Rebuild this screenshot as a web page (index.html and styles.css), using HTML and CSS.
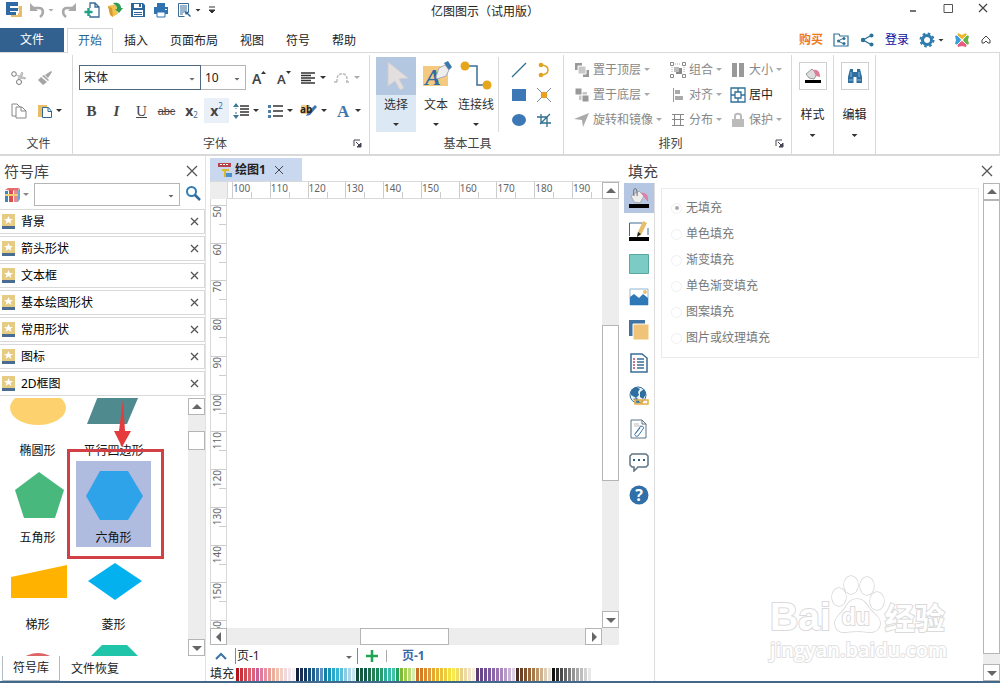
FILE: index.html
```html
<!DOCTYPE html>
<html lang="zh-CN">
<head>
    <meta charset="UTF-8">
    <meta name="viewport" content="width=device-width, initial-scale=1.0">
    <title>亿图图示（试用版）</title>
    <link rel="stylesheet" href="styles.css">
</head>
<body>
    <div class="app">
        <header class="titlebar">
            <div class="quick-access">
                <svg class="icon" viewBox="0 0 16 16"><path d="M0 0h12v4H4v2h8v3H4v1h6v3H0z" fill="#2f6aa5"/><path d="M13 4h3v11H5v-2h7v-2h1V7h-1z" fill="#e9bd68"/></svg>
                <button class="tool" aria-label="撤销"><svg class="icon" viewBox="0 0 16 16"><path d="M4 6h6c5 0 5 6 1 9" fill="none" stroke="#a9a9a9" stroke-width="2.500"/><path d="M1 1v8h8z" fill="#a9a9a9"/></svg><span class="caret pale"></span></button>
                <button class="tool" aria-label="重做"><svg class="icon" viewBox="0 0 16 16"><path d="M12 6H6c-5 0-5 6-1 9" fill="none" stroke="#a9a9a9" stroke-width="2.500"/><path d="M15 1v8H7z" fill="#a9a9a9"/></svg></button>
                <button class="tool" aria-label="新建"><svg class="icon" viewBox="0 0 16 16"><path d="M6 6V1h5l4 4v10H6v-2M11 1v4h4" fill="#fff" stroke="#3b6c96" stroke-width="1.300"/><path d="M4.500 6v8M0.500 10h8" stroke="#1fa287" stroke-width="2.400"/></svg></button>
                <button class="tool" aria-label="打开"><svg class="icon" viewBox="0 0 16 16"><path d="M1 4l8-2 2 10-6 3z" fill="#f1c152"/><path d="M6 1c5-1 8 1 8 5h2l-4 5-4-4h2C10 3 8 3 6 1z" fill="#2c9d54"/><path d="M1 4l4 2 1 9-3-2z" fill="#d99a2c"/></svg></button>
                <button class="tool" aria-label="保存"><svg class="icon" viewBox="0 0 16 16"><path d="M1 1h12l2 2v12H1z" fill="#2d6699"/><path d="M4 2h8v4H4zM3 8h10v6H3z" fill="#fff"/><path d="M9 2h2v3H9zM4 10h8v1H4zM4 12h8v1H4z" fill="#2d6699"/></svg></button>
                <button class="tool" aria-label="打印"><svg class="icon" viewBox="0 0 16 16"><path d="M4 1h8v4H4zM1 5h14v7h-3v-2H4v2H1z" fill="#2f73b0"/><path d="M4 10h8v5H4z" fill="#fff" stroke="#2f73b0"/><path d="M12 7h2v1h-2z" fill="#fff"/></svg></button>
                <button class="tool" aria-label="页面预览"><svg class="icon" viewBox="0 0 16 16"><path d="M2.500 1.500h10v9M2.500 1.500v13h6" fill="none" stroke="#3b6c96"/><path d="M4 4h7M4 6h7M4 8h7M4 10h4M4 12h3" stroke="#3b6c96"/><path d="M8 9l5 1-1 1 3 3-1 1-3-3-1 1z" fill="#2d6699"/></svg><span class="caret"></span></button>
                <button class="tool" aria-label="自定义"><svg class="icon-xs" viewBox="0 0 8 8"><path d="M1 1h6M1 4h6L4 7z" stroke="#333" fill="#333"/></svg></button>
            </div>
            <h1 class="app-title">亿图图示（试用版）</h1>
            <div class="window-controls">
                <button aria-label="最小化"><svg class="icon-s" viewBox="0 0 12 12"><path d="M3 9h6" stroke="#444" stroke-width="1.500"/></svg></button>
                <button aria-label="最大化"><svg class="icon-s" viewBox="0 0 12 12"><path d="M2 2.500h8.500v8H2z" fill="none" stroke="#555"/></svg></button>
                <button aria-label="关闭"><svg class="icon-s" viewBox="0 0 12 12"><path d="M2 2l8 8M10 2l-8 8" stroke="#444" stroke-width="1.200"/></svg></button>
            </div>
        </header>

        <nav class="menu">
            <button class="menu-file">文件</button>
            <button class="menu-tab active">开始</button>
            <button class="menu-tab">插入</button>
            <button class="menu-tab">页面布局</button>
            <button class="menu-tab">视图</button>
            <button class="menu-tab">符号</button>
            <button class="menu-tab">帮助</button>
            <div class="account">
                <a href="#" class="buy">购买</a>
                <button class="tool" aria-label="分享文件夹"><svg class="icon" viewBox="0 0 16 16"><path d="M1 2h5l1 2h8v10H1z" fill="none" stroke="#2f7099" stroke-width="1.200"/><path d="M11 6L5 9l6 3" fill="none" stroke="#2f7099"/><circle cx="11" cy="6.500" r="1.500" fill="#2f7099"/><circle cx="5.500" cy="9" r="1.500" fill="#2f7099"/><circle cx="11" cy="11.500" r="1.500" fill="#2f7099"/></svg></button>
                <button class="tool" aria-label="分享"><svg class="icon" viewBox="0 0 16 16"><path d="M13 3L4 8l9 5" fill="none" stroke="#2f7099" stroke-width="1.400"/><circle cx="12.500" cy="3.500" r="2" fill="#2f7099"/><circle cx="4" cy="8" r="2.200" fill="#2f7099"/><circle cx="12.500" cy="12.500" r="2" fill="#2f7099"/></svg></button>
                <a href="#" class="login">登录</a>
                <button class="tool" aria-label="设置"><svg class="icon" viewBox="0 0 16 16"><circle cx="8" cy="8" r="4.500" fill="none" stroke="#2f7cae" stroke-width="3"/><circle cx="8" cy="8" r="6.500" fill="none" stroke="#2f7cae" stroke-width="2" stroke-dasharray="2.600 2.500"/></svg><span class="caret"></span></button>
                <button class="tool" aria-label="社区"><svg class="icon" viewBox="0 0 16 16"><path d="M8 7L3 4l1-3 4 2 4-2 1 3z" fill="#f0b52b"/><path d="M9 8l3-5 3 1-1 4 1 4-3 1z" fill="#65b548"/><path d="M8 9l5 3-1 3-4-1-4 1-1-3z" fill="#ea5c7d"/><path d="M7 8l-3 5-3-1 1-4-1-4 3-1z" fill="#3a9edb"/><path d="M3 3l10 10M13 3L3 13" stroke="#fff"/></svg></button>
                <button class="tool" aria-label="折叠功能区"><svg class="icon-s" viewBox="0 0 12 12"><path d="M2 6l4-4 4 4v3H8L6 7 4 9H2z" fill="none" stroke="#444"/></svg></button>
            </div>
        </nav>

        <section class="ribbon">
            <div class="group group-file">
                <div class="file-tools">
                    <button class="tool" aria-label="剪切"><svg class="icon" viewBox="0 0 16 16"><circle cx="3" cy="4" r="2.300" fill="none" stroke="#777"/><circle cx="8" cy="12" r="2.500" fill="none" stroke="#777"/><path d="M5 5l10 3-1 1-5-1M7 9l4-7 1 1-2 6" fill="#ccc" stroke="#bbb"/></svg></button>
                    <button class="tool" aria-label="格式刷"><svg class="icon" viewBox="0 0 16 16"><path d="M14 1l1 1-4 6-3-3zM7 5l5 5-1 1-6-5zM4 7l6 5-4 3-5-5z" fill="#a5a5a5"/></svg></button>
                    <button class="tool" aria-label="复制"><svg class="icon" viewBox="0 0 16 16"><path d="M5 13H1V1h5l3 3M5 4h6l4 4v7H5zM10 4v4h5" fill="#fff" stroke="#888"/></svg></button>
                    <button class="tool" aria-label="粘贴"><svg class="icon" viewBox="0 0 16 16"><path d="M1 2h9v3H5v9H1z" fill="#e9bd68"/><path d="M5.500 4.500h6l3 4v6h-9zM11 4.500v4h4" fill="#fff" stroke="#2f6a90"/></svg><span class="caret"></span></button>
                </div>
                <div class="group-label">文件</div>
            </div>

            <div class="group group-font">
                <div class="font-row">
                    <span class="combo combo-font"><select aria-label="字体"><option>宋体</option></select></span>
                    <span class="combo combo-size"><select aria-label="字号"><option>10</option></select></span>
                    <button class="font-btn" aria-label="增大字号"><svg class="icon" viewBox="0 0 16 16"><text x="1" y="14" class="svg-a">A</text><path d="M10 4l2.500-3L15 4z" fill="#333"/></svg></button>
                    <button class="font-btn" aria-label="减小字号"><svg class="icon" viewBox="0 0 16 16"><text x="1" y="14" class="svg-a small">A</text><path d="M10 1h5l-2.500 3z" fill="#333"/></svg></button>
                    <div class="splits">
                        <button class="split" aria-label="对齐方式"><svg class="icon" viewBox="0 0 16 16"><path d="M1 3h14M1 5.500h10M1 8h14M1 10.500h10M1 13h14" stroke="#333" stroke-width="1.300"/></svg><span class="caret"></span></button>
                        <button class="split" aria-label="弧形文字"><svg class="icon" viewBox="0 0 16 16"><path d="M0 12h4M3 12V9c0-7 10-7 10 0v3M12 12h4" fill="none" stroke="#bbb" stroke-width="1.500" stroke-dasharray="3 1"/></svg><span class="caret pale"></span></button>
                    </div>
                </div>
                <div class="font-row">
                    <button class="font-btn serif"><b>B</b></button>
                    <button class="font-btn serif"><b><i>I</i></b></button>
                    <button class="font-btn serif"><u>U</u></button>
                    <button class="font-btn strike"><s>abc</s></button>
                    <button class="font-btn script"><b>x</b><sub>2</sub></button>
                    <button class="font-btn script hover"><b>x</b><sup>2</sup></button>
                    <div class="splits">
                        <button class="split" aria-label="行距"><svg class="icon" viewBox="0 0 16 16"><path d="M7 3h9M7 6h9M7 9h9M7 12h9" stroke="#333" stroke-width="1.500"/><path d="M3 2v4M3 9v5" stroke="#3b6c96" stroke-dasharray="2 1"/><path d="M0 4l3-4 3 4zM0 12l3 4 3-4z" fill="#3f7595"/></svg><span class="caret"></span></button>
                        <button class="split" aria-label="项目符号"><svg class="icon" viewBox="0 0 16 16"><path d="M6 3h10M6 8h10M6 13h10" stroke="#333" stroke-width="1.300"/><path d="M1 2h3v3H1zM1 7h3v3H1zM1 12h3v3H1z" fill="#4f7ea6"/></svg><span class="caret"></span></button>
                        <button class="split" aria-label="突出显示"><svg class="icon" viewBox="0 0 16 16"><path d="M0 2h9v9H0z" fill="#f6cf85"/><path d="M14 2l2 2-7 8-4 1 2-4z" fill="#3e77ad"/><text x="-1" y="10" class="svg-ab">ab</text></svg><span class="caret"></span></button>
                        <button class="split" aria-label="字体颜色"><svg class="icon" viewBox="0 0 16 16"><text x="2" y="14" class="svg-a blue">A</text></svg><span class="caret"></span></button>
                    </div>
                </div>
                <div class="group-label">字体<svg class="launcher" viewBox="0 0 9 9"><path d="M1 7V1h6" fill="none" stroke="#445"/><path d="M3 3l4 4M8 4v4H4z" stroke="#445" fill="#445"/></svg></div>
            </div>

            <div class="group group-tools">
                <div class="tools-body">
                    <button class="big selected">
                        <svg class="icon-big" viewBox="0 0 32 32"><path d="M8 2l20 16-9 1 5 9-4 2-5-9-7 5z" fill="#e3dfdf" stroke="#cfcdd2"/></svg>
                        <span>选择</span><span class="caret"></span>
                    </button>
                    <button class="big">
                        <svg class="icon-big" viewBox="0 0 32 32"><path d="M3 6h25v20H3z" fill="#f3ca80"/><text x="5" y="25" class="svg-a big-a">A</text><path d="M16 17l3-9 6-3 4 5-3 6-9 3z" fill="#eee" stroke="#aab"/><path d="M24 3l4-2 4 6-3 3z" fill="#3d78a8"/></svg>
                        <span>文本</span><span class="caret"></span>
                    </button>
                    <button class="big">
                        <svg class="icon-big" viewBox="0 0 32 32"><path d="M6 6h11v19h10" fill="none" stroke="#3a6f96" stroke-width="1.500"/><circle cx="5" cy="6" r="4.500" fill="#e5a61c"/><circle cx="27" cy="25" r="4.500" fill="#e5a61c"/></svg>
                        <span>连接线</span><span class="caret"></span>
                    </button>
                    <div class="draw-tools">
                        <button class="tool" aria-label="直线"><svg class="icon" viewBox="0 0 16 16"><path d="M1 15L15 1" stroke="#2f6f8f" stroke-width="1.200"/></svg></button>
                        <button class="tool" aria-label="弧线"><svg class="icon" viewBox="0 0 16 16"><path d="M6 3c8 1 8 9 0 10" fill="none" stroke="#e0a222" stroke-width="1.500"/><circle cx="5" cy="3" r="2.300" fill="#e0a222"/><circle cx="5" cy="13" r="2.300" fill="#e0a222"/></svg></button>
                        <button class="tool" aria-label="矩形"><svg class="icon" viewBox="0 0 16 16"><path d="M1 2h14v12H1z" fill="#3b78b5"/></svg></button>
                        <button class="tool" aria-label="连接点"><svg class="icon" viewBox="0 0 16 16"><path d="M1 1l14 14M15 1L1 15" stroke="#78909c"/><circle cx="8" cy="8" r="3.200" fill="#e9a01c"/></svg></button>
                        <button class="tool" aria-label="椭圆"><svg class="icon" viewBox="0 0 16 16"><ellipse cx="8" cy="8" rx="7" ry="6" fill="#3b78b5"/></svg></button>
                        <button class="tool" aria-label="裁剪"><svg class="icon" viewBox="0 0 16 16"><path d="M5 2v9h10M1 5h10v10M4 12L14 2" fill="none" stroke="#2f6f8f" stroke-width="1.300"/></svg></button>
                    </div>
                </div>
                <div class="group-label">基本工具</div>
            </div>

            <div class="group group-arrange">
                <div class="arrange-body">
                    <button class="arrange" disabled><svg class="icon" viewBox="0 0 16 16"><path d="M1 1h7v7H1zM9 8h6v7H9z" fill="#999"/><path d="M4 4h8v8H4z" fill="#c8c8c8" stroke="#fff"/></svg>置于顶层<span class="caret pale"></span></button>
                    <button class="arrange" disabled><svg class="icon" viewBox="0 0 16 16"><path d="M6 6h6v6H6z" fill="#888"/><path d="M.5.500h3v3h-3zM12.500 12.500h3v3h-3z" fill="#fff" stroke="#888"/><path d="M12.500.500h3v3h-3zM.5 12.500h3v3h-3z" fill="#fff" stroke="#888"/><path d="M4 5h5v5H4z" fill="#bbb"/><path d="M5 2h6M2 5v6M14 5v6" stroke="#aaa" stroke-dasharray="1 1"/></svg>组合<span class="caret pale"></span></button>
                    <button class="arrange" disabled><svg class="icon" viewBox="0 0 16 16"><path d="M2 1h5v14H2zM9 1h5v14H9z" fill="#999"/></svg>大小<span class="caret pale"></span></button>
                    <button class="arrange" disabled><svg class="icon" viewBox="0 0 16 16"><path d="M5 5h8v8H5z" fill="#c8c8c8"/><path d="M1 1h7v7H1zM8 8h7v7H8z" fill="#999" stroke="#fff"/></svg>置于底层<span class="caret pale"></span></button>
                    <button class="arrange" disabled><svg class="icon" viewBox="0 0 16 16"><path d="M3.500 1v14" stroke="#999"/><path d="M5 3h5v4H5zM5 9h8v4H5z" fill="#aaa"/></svg>对齐<span class="caret pale"></span></button>
                    <button class="arrange"><svg class="icon" viewBox="0 0 16 16"><path d="M1 1h14v14H1zM5 5h6v6H5zM8 1v4M8 11v4M1 8h4M11 8h4" fill="none" stroke="#2f7099" stroke-width="1.300"/></svg>居中</button>
                    <button class="arrange" disabled><svg class="icon" viewBox="0 0 16 16"><path d="M15 1L9 15 8 8 0 7z" fill="#aaa"/></svg>旋转和镜像<span class="caret pale"></span></button>
                    <button class="arrange" disabled><svg class="icon" viewBox="0 0 16 16"><path d="M2 2.500h12M2 7.500h12M2 13.500h12M4.500 2v12M10.500 2v12" stroke="#888"/></svg>分布<span class="caret pale"></span></button>
                    <button class="arrange" disabled><svg class="icon" viewBox="0 0 16 16"><path d="M2 7h12v8H2z" fill="#bbb"/><path d="M5 7V4c0-3 6-3 6 0v3" fill="none" stroke="#bbb" stroke-width="2"/></svg>保护<span class="caret pale"></span></button>
                </div>
                <div class="group-label">排列<svg class="launcher" viewBox="0 0 9 9"><path d="M1 7V1h6" fill="none" stroke="#445"/><path d="M3 3l4 4M8 4v4H4z" stroke="#445" fill="#445"/></svg></div>
            </div>

            <div class="group group-single">
                <button class="framed">
                    <span class="frame"><svg class="icon" viewBox="0 0 16 16"><path d="M1 6l6-5 5 5-3 5-5-1z" fill="#ddd" stroke="#999"/><path d="M8 2c5-1 7 2 7 7l-4-1z" fill="#dd7f98"/><path d="M0 12h16v3H0z" fill="#000"/></svg></span>
                    <span>样式</span><span class="caret"></span>
                </button>
            </div>
            <div class="group group-single">
                <button class="framed">
                    <span class="frame"><svg class="icon" viewBox="0 0 16 16"><path d="M3 1h3v3h4V1h3l2 8v6H9.500V9h-3v6H1V9z" fill="#2f6f9f"/><path d="M2 12h4M10 12h4M4 4v5M12 4v5" stroke="#8fbbd8"/></svg></span>
                    <span>编辑</span><span class="caret"></span>
                </button>
            </div>
        </section>

        <main class="workspace">
            <aside class="library">
                <div class="panel-head">
                    <h2>符号库</h2>
                    <button class="close" aria-label="关闭符号库"><svg class="icon-s" viewBox="0 0 12 12"><path d="M1 1l10 10M11 1L1 11" stroke="#555" stroke-width="1.300"/></svg></button>
                </div>
                <div class="search-row">
                    <button class="tool" aria-label="选择符号库"><svg class="icon" viewBox="0 0 16 16"><path d="M1 4h3v11H1z" fill="#3b86ba"/><path d="M5 3h4v12H5z" fill="#d94f4f"/><path d="M10 4h4v11h-4z" fill="#e78b93"/><path d="M1 3l3-2h11l-1 3z" fill="#e36d6d"/><path d="M14 4l2-3v11l-2 3z" fill="#6aa8d0"/><path d="M1 8h13" stroke="#f3d06b" stroke-width="2"/></svg><span class="caret"></span></button>
                    <span class="combo combo-search"><input type="text" aria-label="搜索符号"></span>
                    <button class="tool" aria-label="搜索"><svg class="icon" viewBox="0 0 16 16"><circle cx="6.500" cy="6.500" r="4.500" fill="none" stroke="#2f7cb5" stroke-width="2"/><path d="M10 10l5 5" stroke="#2f6a9a" stroke-width="2.500"/></svg></button>
                </div>
                <ul class="lib-list" id="libList"></ul>
                <div class="shapes">
                    <div class="shape-view">
                        <div class="shape-grid">
                            <button class="shape"><svg viewBox="0 0 60 60"><ellipse cx="30" cy="27" rx="28" ry="17" fill="#fdd26e"/></svg>椭圆形</button>
                            <button class="shape"><svg viewBox="0 0 60 60"><path d="M16 10h41L43 43H3z" fill="#4f8a8f"/></svg>平行四边形</button>
                            <button class="shape"><svg viewBox="0 0 60 60"><path d="M31 4l25 18-9 28H16L7 22z" fill="#48b87c"/></svg>五角形</button>
                            <button class="shape chosen"><svg viewBox="0 0 60 60"><path d="M16 3h28l15 25-15 24H16L2 28z" fill="#2ea3ea"/></svg>六角形</button>
                            <button class="shape"><svg viewBox="0 0 60 60"><path d="M3 22L59 10v33H3z" fill="#ffb200"/></svg>梯形</button>
                            <button class="shape"><svg viewBox="0 0 60 60"><path d="M31 8l27 18-27 19L4 26z" fill="#03b1ef"/></svg>菱形</button>
                            <button class="shape" aria-label="圆形"><svg viewBox="0 0 60 60"><circle cx="30" cy="37" r="26" fill="#dd6466"/></svg></button>
                            <button class="shape" aria-label="八角形"><svg viewBox="0 0 60 60"><path d="M18 3h25l14 14v24L43 55H18L4 41V17z" fill="#20c4a8"/></svg></button>
                        </div>
                        <svg class="marker" viewBox="0 0 100 164"><path d="M57 3l2 32h6L56 51 48 35h5z" fill="#e63b3d"/><path d="M2.500 54.500h94v107h-94z" fill="none" stroke="#d04045" stroke-width="3"/></svg>
                    </div>
                    <div class="scroll scroll-v">
                        <button aria-label="向上"><svg viewBox="0 0 10 10"><path d="M0 7l5-5 5 5z"/></svg></button>
                        <span class="thumb thumb-lib"></span>
                        <button aria-label="向下"><svg viewBox="0 0 10 10"><path d="M0 3l5 5 5-5z"/></svg></button>
                    </div>
                </div>
                <div class="lib-tabs">
                    <button class="lib-tab active">符号库</button>
                    <button class="lib-tab">文件恢复</button>
                </div>
            </aside>

            <section class="editor">
                <div class="doc-tabs">
                    <div class="doc-tab">
                        <svg class="icon" viewBox="0 0 16 16"><path d="M1 1h13v4H1z" fill="#b8444b"/><path d="M3 2.500h9" stroke="#fff" stroke-dasharray="2 1"/><path d="M5 7h7v2H5zM7 9h2v6H7z" fill="#d9b92f"/><path d="M9 11h6v4H9z" fill="#4a91cc"/></svg>
                        <b>绘图1</b>
                        <button class="close" aria-label="关闭绘图1"><svg class="icon-xs" viewBox="0 0 8 8"><path d="M0 0l8 8M8 0L0 8" stroke="#445"/></svg></button>
                    </div>
                </div>
                <div class="canvas-area">
                    <div class="corner"></div>
                    <div class="ruler-h" id="rulerH"></div>
                    <div class="ruler-v" id="rulerV"></div>
                    <div class="canvas"></div>
                    <div class="scroll scroll-v editor-scroll-v">
                        <button aria-label="向上"><svg viewBox="0 0 10 10"><path d="M0 7l5-5 5 5z"/></svg></button>
                        <span class="thumb thumb-editor-v"></span>
                        <button aria-label="向下"><svg viewBox="0 0 10 10"><path d="M0 3l5 5 5-5z"/></svg></button>
                    </div>
                    <div class="scroll scroll-h editor-scroll-h">
                        <button aria-label="向左"><svg viewBox="0 0 10 10"><path d="M7 0L2 5l5 5z"/></svg></button>
                        <span class="thumb thumb-editor-h"></span>
                        <button aria-label="向右"><svg viewBox="0 0 10 10"><path d="M3 0l5 5-5 5z"/></svg></button>
                    </div>
                </div>
                <div class="pages">
                    <button class="tool" aria-label="页面列表"><svg class="icon-s" viewBox="0 0 12 12"><path d="M1 9l5-5 5 5" fill="none" stroke="#3b73a5" stroke-width="2"/></svg></button>
                    <span class="combo combo-page"><select aria-label="页面"><option>页-1</option></select></span>
                    <button class="tool" aria-label="新建页面"><svg class="icon-s" viewBox="0 0 12 12"><path d="M6 0v12M0 6h12" stroke="#1fa550" stroke-width="2.500"/></svg></button>
                    <button class="page-tab">页-1</button>
                </div>
                <div class="palette"><span>填充</span><div class="swatches" id="swatches"></div></div>
            </section>

            <aside class="fill">
                <div class="panel-head">
                    <h2>填充</h2>
                    <button class="close" aria-label="关闭填充"><svg class="icon-s" viewBox="0 0 12 12"><path d="M1 1l10 10M11 1L1 11" stroke="#555" stroke-width="1.300"/></svg></button>
                </div>
                <div class="fill-body">
                    <div class="side-tools">
                        <button class="on" aria-label="填充"><svg viewBox="0 0 20 20"><path d="M2 8l8-5 5 5-4 7-6-1z" fill="#eee" stroke="#aaa"/><path d="M5 8c-2-10 4-10 3 0" fill="none" stroke="#666"/><path d="M12 5c5-1 8 3 7 9l-4-5z" fill="#df7fa5"/><path d="M0 16h20v4H0z" fill="#000"/></svg></button>
                        <button aria-label="线条"><svg viewBox="0 0 20 20"><path d="M.5 15V2H13M19 7v7" fill="none" stroke="#3b6c96"/><path d="M14 0l4 2-6 12-4 2 1-5z" fill="#e6bd6a"/><path d="M9 11l3 2-4 3z" fill="#222"/><path d="M0 16h20v4H0z" fill="#000"/></svg></button>
                        <button aria-label="阴影"><svg viewBox="0 0 20 20"><path d="M.5.500h19v19H.5z" fill="#7accc4" stroke="#59a9a2"/></svg></button>
                        <button aria-label="图片"><svg viewBox="0 0 20 20"><path d="M1 2h18v16H1z" fill="#fff" stroke="#8fb6d3"/><path d="M1 10l4-3 5 4 4-4 5 4v7H1z" fill="#2f78b7"/><circle cx="16" cy="5" r="2" fill="#e8c274"/></svg></button>
                        <button aria-label="图层"><svg viewBox="0 0 20 20"><path d="M0 0h16v16H0z" fill="#3f74a3"/><path d="M4 4h16v16H4z" fill="#efc478" stroke="#fff"/></svg></button>
                        <button aria-label="属性"><svg viewBox="0 0 20 20"><path d="M2 1h11l5 4v14H2z" fill="#fff" stroke="#3b6c96" stroke-width="1.500"/><path d="M8 6h7M8 9h7M8 12h7M8 15h7" stroke="#3b6c96" stroke-width="1.300"/><path d="M4 6h2M4 9h2M4 12h2M4 15h2" stroke="#b34b66" stroke-width="1.500"/></svg></button>
                        <button aria-label="超链接"><svg viewBox="0 0 20 20"><circle cx="9" cy="9" r="8" fill="#eef5fa" stroke="#2f6f9f"/><path d="M2 4l5-3 4 2-2 3 1 3-3 3-5-3zM11 6l4-3 2 5-3 5-3-2zM4 13l4-1 3 3-2 2z" fill="#2f6f9f"/><path d="M6 14h6v4H6zM13 14h6v4h-6z" fill="none" stroke="#e6ae42" stroke-width="1.500"/></svg></button>
                        <button aria-label="附件"><svg viewBox="0 0 20 20"><path d="M2 1h11l4 4v14H2zM13 1v4h4" fill="#fff" stroke="#5c7485"/><path d="M5 5h5M5 7h7" stroke="#bbb"/><path d="M6 15l5-7c2-2 5 0 3 2l-5 7c-2 1-4-1-3-2l5-6" fill="none" stroke="#3b79ad"/></svg></button>
                        <button aria-label="批注"><svg viewBox="0 0 20 20"><path d="M3 2h14l2 2v9l-2 2H9l-4 4v-4H3l-2-2V4z" fill="#fff" stroke="#5c7485" stroke-width="1.500"/><path d="M4 7h2v2H4zM9 7h2v2H9zM14 7h2v2h-2z" fill="#2f5f86"/></svg></button>
                        <button aria-label="帮助"><svg viewBox="0 0 20 20"><circle cx="10" cy="10" r="9.500" fill="#2f6faa"/><text x="10" y="16" class="svg-help">?</text></svg></button>
                    </div>
                    <div class="fill-main">
                        <fieldset class="fill-options">
                            <label><input type="radio" name="fill" checked>无填充</label>
                            <label><input type="radio" name="fill">单色填充</label>
                            <label><input type="radio" name="fill">渐变填充</label>
                            <label><input type="radio" name="fill">单色渐变填充</label>
                            <label><input type="radio" name="fill">图案填充</label>
                            <label><input type="radio" name="fill">图片或纹理填充</label>
                        </fieldset>
                        <div class="watermark">
                            <div class="wm-brand">
                                <span class="wm-bai">Bai</span>
                                <span class="wm-paw"><svg viewBox="0 0 54 60"><g fill="#fff" stroke="#d6d6d6" stroke-width="1.500"><ellipse cx="8" cy="23" rx="7" ry="9"/><ellipse cx="20" cy="11" rx="7" ry="9"/><ellipse cx="36" cy="12" rx="7" ry="9"/><ellipse cx="46" cy="27" rx="7" ry="9"/><path d="M26 25c6 0 9 4 12 9 4 6 11 8 11 15s-6 10-12 9-15-1-22 0S4 55 4 49s6-9 10-15c3-5 6-9 12-9z"/></g></svg><span>du</span></span>
                                <span class="wm-cn">经验</span>
                            </div>
                            <div class="wm-url">jingyan.baidu.com</div>
                        </div>
                    </div>
                    <div class="scroll scroll-v">
                        <button aria-label="向上"><svg viewBox="0 0 10 10"><path d="M0 7l5-5 5 5z"/></svg></button>
                        <span class="thumb thumb-fill"></span>
                        <button aria-label="向下"><svg viewBox="0 0 10 10"><path d="M0 3l5 5 5-5z"/></svg></button>
                    </div>
                </div>
            </aside>
        </main>
    </div>
    <script src="script.js"></script>
</body>
</html>
```

FILE: styles.css
```css
* {
    margin: 0;
    padding: 0;
    box-sizing: border-box;
}

body {
    font-family: "Noto Sans", "Noto Sans CJK SC", sans-serif;
    font-size: 12px;
    line-height: 16px;
    color: #222;
    background: #fff;
}

button, input, select {
    font: inherit;
    color: inherit;
    border: none;
    background: none;
}

a {
    text-decoration: none;
}

svg {
    display: block;
    flex: none;
}

.app {
    display: flex;
    flex-direction: column;
    height: 100vh;
    border-bottom: 2px solid #42688a;
    overflow: hidden;
}

.icon {
    width: 16px;
    height: 16px;
    overflow: visible;
}

.icon-s {
    width: 12px;
    height: 12px;
}

.icon-xs {
    width: 8px;
    height: 8px;
}

.caret {
    width: 6px;
    height: 3px;
    background: #333;
    clip-path: polygon(0 0, 100% 0, 50% 100%);
}

.caret.pale {
    background: #aaa;
}

.tool {
    display: flex;
    align-items: center;
    gap: 3px;
}

/* title bar */
.titlebar {
    display: grid;
    grid-template-columns: 1fr auto 1fr;
    align-items: center;
    height: 24px;
    flex: none;
}

.quick-access {
    display: flex;
    align-items: center;
    gap: 7px;
    padding: 0 0 4px 6px;
}

.app-title {
    font-size: 12px;
    font-weight: normal;
    margin-right: 30px;
}

.window-controls {
    display: flex;
    justify-content: flex-end;
    padding-bottom: 8px;
}

.window-controls button {
    display: grid;
    place-items: center;
    width: 35px;
}

/* menu */
.menu {
    display: flex;
    height: 28px;
    padding-top: 4px;
    flex: none;
}

.menu-file {
    width: 64px;
    margin-right: 3px;
    background: #33618f;
    color: #fff;
}

.menu-tab {
    padding: 0 10px;
    border: 1px solid transparent;
    border-bottom: none;
}

.menu-tab.active {
    color: #2f6690;
    background: #fff;
    border-color: #d5d5d5;
    margin-bottom: -1px;
    z-index: 1;
}

.account {
    display: flex;
    align-items: center;
    gap: 10px;
    margin-left: auto;
    padding-right: 8px;
}

.buy {
    color: #ee7a1c;
    font-weight: bold;
}

.login {
    color: #0c0c9c;
}

/* ribbon */
.ribbon {
    display: flex;
    height: 104px;
    flex: none;
    border: 1px solid #d9d9d9;
    border-left: none;
    border-bottom-width: 2px;
}

.group {
    display: flex;
    flex-direction: column;
    border-right: 1px solid #d9d9d9;
    margin-top: 2px;
}

.group-label {
    position: relative;
    margin-top: auto;
    height: 20px;
    line-height: 20px;
    text-align: center;
    color: #444;
}

.launcher {
    position: absolute;
    right: 7px;
    top: 5px;
    width: 9px;
    height: 9px;
}

.group-file {
    width: 73px;
}

.group-file .group-label {
    padding-left: 5px;
}

.file-tools {
    display: grid;
    grid-template-columns: 26px 30px;
    row-gap: 8px;
    grid-auto-rows: 25px;
    padding: 10px 0 0 11px;
}

.group-font {
    width: 297px;
    padding: 10px 0 0 6px;
    gap: 8px;
}

.group-font .group-label {
    padding-right: 18px;
}

.font-row {
    display: flex;
    height: 25px;
}

.combo {
    position: relative;
    display: block;
    border: 1px solid #b5b5b5;
}

.combo::after {
    content: "";
    position: absolute;
    right: 5px;
    top: 50%;
    width: 6px;
    height: 3px;
    background: #666;
    clip-path: polygon(0 0, 100% 0, 50% 100%);
    pointer-events: none;
}

.combo select, .combo input {
    appearance: none;
    display: block;
    width: 100%;
    height: 100%;
    padding: 0 4px;
    outline: none;
}

.combo-font {
    width: 122px;
    border-color: #4f6a80;
}

.combo-size {
    width: 45px;
    border-left: none;
}

.font-btn {
    display: grid;
    place-items: center;
    width: 25px;
    color: #444;
}

.serif {
    font-family: "Liberation Serif", serif;
    font-size: 15px;
}

.strike {
    font-family: "Liberation Sans", sans-serif;
    font-size: 11px;
}

.script {
    display: flex;
    align-items: center;
    justify-content: center;
    font-size: 14px;
}

.script sub, .script sup {
    font-size: 8px;
    line-height: 8px;
    color: #3b6c96;
}

.script sub {
    align-self: flex-end;
    padding-bottom: 4px;
}

.script sup {
    align-self: flex-start;
    padding-top: 4px;
}

.hover {
    background: #e9f0f8;
}

.splits {
    display: flex;
    margin-left: 2px;
}

.split {
    display: flex;
    align-items: center;
    gap: 4px;
    width: 34px;
    padding-left: 2px;
}

.svg-ab {
    font-size: 10px;
    font-weight: bold;
    fill: #222;
}

.svg-a {
    font-size: 14px;
    font-weight: 600;
    fill: #444;
}

.svg-a.small {
    font-size: 13px;
}

.svg-a.blue {
    font-family: "Liberation Serif", serif;
    font-size: 17px;
    font-weight: bold;
    fill: #3e77ad;
}

.svg-a.big-a {
    font-family: "Liberation Serif", serif;
    font-size: 24px;
    font-weight: bold;
    font-style: italic;
    fill: #2f6ba5;
}

.svg-help {
    font-size: 16px;
    font-weight: bold;
    text-anchor: middle;
    fill: #fff;
}

.group-tools {
    width: 194px;
}

.group-tools .group-label {
    padding-left: 2px;
}

.tools-body {
    display: flex;
    padding: 2px 0 0 6px;
}

.big {
    display: flex;
    flex-direction: column;
    align-items: center;
    width: 40px;
    height: 75px;
}

.icon-big {
    width: 32px;
    height: 32px;
    margin: 3px 0;
}

.big .caret {
    margin-top: 10px;
}

.big span:not(.caret) {
    margin-top: 2px;
    color: #333;
}

.selected {
    background: linear-gradient(#b4c7e0 38px, #dce8f4 38px);
}

.draw-tools {
    display: grid;
    grid-template-columns: 25px 25px;
    grid-auto-rows: 25px;
    margin-left: 2px;
    padding-left: 12px;
    border-left: 1px solid #d9d9d9;
}

.group-arrange {
    width: 228px;
}

.group-arrange .group-label {
    padding-right: 14px;
}

.arrange-body {
    display: grid;
    grid-template-columns: 96px 60px 60px;
    grid-auto-rows: 25px;
    padding: 2px 0 0 10px;
}

.arrange {
    display: flex;
    align-items: center;
    gap: 3px;
    white-space: nowrap;
}

.arrange:disabled {
    color: #888;
}

.group-single {
    width: 42px;
    align-items: center;
}

.framed {
    display: flex;
    flex-direction: column;
    align-items: center;
    padding-top: 7px;
}

.frame {
    display: grid;
    place-items: center;
    width: 28px;
    height: 28px;
    border: 1px solid #d0d0d0;
    margin-bottom: 17px;
}

.framed .caret {
    margin-top: 11px;
}

/* workspace */
.workspace {
    display: flex;
    gap: 4px;
    flex: 1;
    min-height: 0;
}

.panel-head {
    display: flex;
    align-items: center;
    justify-content: space-between;
    height: 27px;
    padding: 3px 7px 0 4px;
    flex: none;
}

.panel-head h2 {
    font-size: 15px;
    font-weight: normal;
    color: #444;
}

.library {
    display: flex;
    flex-direction: column;
    width: 206px;
    border-right: 1px solid #e2e2e2;
}

.search-row {
    display: flex;
    height: 23px;
    padding-left: 4px;
    gap: 5px;
    flex: none;
}

.combo-search {
    flex: 1;
}

.search-row .tool:last-child {
    padding: 0 4px 3px 0;
}

.search-row .caret {
    background: #888;
}

.lib-list {
    list-style: none;
    display: flex;
    flex-direction: column;
    gap: 2px;
    padding-top: 3px;
    flex: none;
}

.lib-list li {
    display: flex;
    align-items: center;
    gap: 6px;
    height: 25px;
    padding: 0 5px 0 2px;
    border: 1px solid #d9d9d9;
    border-left: none;
    color: #000;
}

.lib-list .icon {
    width: 13px;
    height: 15px;
}

.lib-list .close {
    margin-left: auto;
}

.lib-list .close svg {
    width: 9px;
    height: 9px;
}

.shapes {
    display: flex;
    flex: 1;
    min-height: 0;
    padding-top: 2px;
}

.shape-view {
    position: relative;
    flex: 1;
    overflow: hidden;
}

.shape-grid {
    display: grid;
    grid-template-columns: 76px 76px;
    grid-auto-rows: 87px;
    margin-top: -24px;
}

.shape {
    display: flex;
    flex-direction: column;
    align-items: center;
    gap: 2px;
    padding-top: 7px;
    margin: 0 1px 1px 0;
    color: #111;
}

.shape svg {
    width: 60px;
    height: 60px;
}

.shape.chosen {
    background: #b0bcdf;
}

.marker {
    position: absolute;
    left: 66px;
    top: -2px;
    width: 100px;
    height: 164px;
    pointer-events: none;
}

.lib-tabs {
    display: flex;
    height: 25px;
    flex: none;
}

.lib-tab {
    padding: 0 11px;
}

.lib-tab.active {
    margin-left: 2px;
    padding: 0 10px;
    border: 1px solid #b0bcc6;
    border-top: none;
}

/* scroll bars */
.scroll {
    display: flex;
    background: #ededed;
}

.scroll-v {
    flex-direction: column;
    width: 17px;
}

.scroll button {
    display: grid;
    place-items: center;
    width: 17px;
    height: 17px;
    flex: none;
    background: #fff;
    border: 1px solid #b5b5b5;
}

.scroll button svg {
    width: 10px;
    height: 10px;
    fill: #666;
}

.scroll button:last-child {
    margin-top: auto;
    margin-left: auto;
}

.scroll-v button:last-child {
    margin-left: 0;
}

.thumb {
    background: #fff;
    border: 1px solid #b5b5b5;
}

.thumb-lib {
    height: 19px;
    margin-top: 16px;
}

.thumb-editor-v {
    height: 156px;
    margin-top: 126px;
}

.thumb-editor-h {
    width: 89px;
    margin-left: 133px;
}

.thumb-fill {
    flex: 1;
    margin-bottom: 10px;
}

/* editor */
.editor {
    display: flex;
    flex-direction: column;
    flex: 1;
    min-width: 0;
}

.doc-tabs {
    display: flex;
    height: 26px;
    border-bottom: 1px solid #d9d9d9;
    flex: none;
}

.doc-tab {
    display: flex;
    align-items: center;
    gap: 2px;
    width: 92px;
    margin-top: 2px;
    padding-left: 7px;
    background: #c9d7ef;
}

.doc-tab .close {
    margin-left: 7px;
}

.canvas-area {
    display: grid;
    grid-template-columns: 17px 1fr 17px;
    grid-template-rows: 17px 1fr 17px;
    flex: 1;
    min-height: 0;
    padding-right: 1px;
}

.corner {
    background: #ededed;
}

.ruler-h {
    display: grid;
    grid-template-columns: repeat(9, 1fr) 30px;
    padding-left: 4px;
    border-left: 1px solid #d9d9d9;
    border-bottom: 1px solid #d9d9d9;
    font-size: 10px;
    line-height: 12px;
    color: #666;
    overflow: hidden;
}

.ruler-h span, .ruler-v span {
    position: relative;
}

.ruler-h span {
    border-left: 1px solid #ccc;
}

.ruler-h span::after {
    content: "";
    position: absolute;
    left: 18px;
    bottom: 0;
    height: 6px;
    border-left: 1px solid #ccc;
}

.ruler-v {
    display: grid;
    grid-template-rows: repeat(11, 1fr) 8px;
    padding-top: 6px;
    border-left: 1px solid #d9d9d9;
    border-right: 1px solid #d9d9d9;
    font-size: 10px;
    line-height: 12px;
    color: #666;
    overflow: hidden;
}

.ruler-v span {
    border-top: 1px solid #ccc;
    min-height: 0;
}

.ruler-v b {
    display: block;
    font-weight: normal;
    writing-mode: vertical-rl;
    transform: rotate(180deg);
}

.ruler-v span::after {
    content: "";
    position: absolute;
    top: 18px;
    right: 0;
    width: 7px;
    border-top: 1px solid #ccc;
}

.editor-scroll-v {
    grid-area: 1 / 3 / 3 / 4;
}

.editor-scroll-h {
    grid-area: 3 / 1 / 4 / 3;
}

.canvas-area::after {
    content: "";
    grid-area: 3 / 3;
    background: #ededed;
}

.pages {
    display: flex;
    align-items: center;
    height: 22px;
    padding-left: 5px;
    gap: 8px;
    flex: none;
}

.combo-page {
    width: 123px;
    border: none;
    border-left: 1px solid #888;
    border-right: 1px solid #888;
}

.combo-page select {
    padding: 0 1px;
}

.page-tab {
    padding-left: 15px;
    border-left: 1px solid #aaa;
    font-weight: bold;
    color: #3a68a8;
    line-height: 12px;
}

.palette {
    display: flex;
    align-items: center;
    height: 14px;
    flex: none;
}

.swatches {
    display: flex;
    gap: 1px;
    margin-left: 2px;
}

.swatches i {
    width: 3px;
    height: 13px;
}

/* fill panel */
.fill {
    display: flex;
    flex-direction: column;
    width: 376px;
}

.fill-body {
    display: flex;
    flex: 1;
    min-height: 0;
}

.side-tools {
    display: flex;
    flex-direction: column;
    gap: 3px;
    width: 31px;
    border-right: 1px solid #ddd;
}

.side-tools button {
    display: grid;
    place-items: center;
    height: 30px;
}

.side-tools svg {
    width: 20px;
    height: 20px;
}

.side-tools .on {
    background: #b4c6e2;
}

.fill-main {
    position: relative;
    flex: 1;
    padding: 5px 4px 0 6px;
}

.fill-options {
    display: flex;
    flex-direction: column;
    gap: 10px;
    padding: 11px 9px;
    border: 1px solid #ebebeb;
    color: #777;
}

.fill-options label {
    display: flex;
    align-items: center;
    gap: 4px;
}

.fill-options input {
    appearance: none;
    display: grid;
    place-items: center;
    width: 11px;
    height: 11px;
    border: 1px solid #f0f0f0;
    border-radius: 50%;
}

.fill-options input:checked::before {
    content: "";
    width: 4px;
    height: 4px;
    border-radius: 50%;
    background: #aaa;
}

.watermark {
    position: absolute;
    right: 36px;
    bottom: 18px;
    color: #fff;
    -webkit-text-stroke: 2px #dadada;
    paint-order: stroke fill;
}

.wm-brand {
    display: flex;
    align-items: flex-end;
    font-family: "Liberation Sans", "Noto Sans CJK SC", sans-serif;
    font-weight: bold;
}

.wm-bai {
    font-size: 39px;
    line-height: 35px;
}

.wm-paw {
    position: relative;
}

.wm-paw svg {
    width: 54px;
    height: 60px;
}

.wm-paw span {
    position: absolute;
    left: 11px;
    bottom: 5px;
    font-size: 23px;
    line-height: 23px;
}

.wm-cn {
    font-size: 30px;
    line-height: 30px;
}

.wm-url {
    margin-top: 3px;
    font-family: "Open Sans", sans-serif;
    font-size: 20px;
    font-weight: 600;
    line-height: 26px;
    -webkit-text-stroke-color: #e2e2e2;
}
```

FILE: script.js
```js
// symbol libraries in the left panel
const libraries = ['背景', '箭头形状', '文本框', '基本绘图形状', '常用形状', '图标', '2D框图'];

document.getElementById('libList').innerHTML = libraries.map(name => `
    <li>
        <svg class="icon" viewBox="0 0 13 15"><path d="M0 0h13v12H0z" fill="#e6cb82"/><path d="M0 12h13v3H0z" fill="#4b6c92"/><path d="M6.500 2l1.300 3H11L8.500 7l1 3-3-2-3 2 1-3L2 5h3.200z" fill="#fff"/></svg>
        ${name}
        <button class="close" aria-label="关闭${name}"><svg viewBox="0 0 9 9"><path d="M1 1l7 7M8 1L1 8" stroke="#555" stroke-width="1.300"/></svg></button>
    </li>`).join('');

// rulers, one mark every 10 mm
let marks = '';
for (let mm = 100; mm <= 190; mm += 10) {
    marks += `<span>${mm}</span>`;
}
document.getElementById('rulerH').innerHTML = marks;

marks = '';
for (let mm = 50; mm <= 160; mm += 10) {
    marks += `<span><b>${mm}</b></span>`;
}
document.getElementById('rulerV').innerHTML = marks;

// fill colours
const colors = [
    'b3141c', 'c8323c', 'd14a55', 'd8606a', 'df5f7d', 'c9609a', 'e07a9b', 'e58fa0', 'e89a94', 'ecae9c', 'f0c0ac', 'f2cfc4', 'f0d8dc', 'f3e3ea', 'f8eef2',
    '111f3f', '1b2f55', '13385f', '164f7a', '1f5f8c', '3a77a8', '5a8fc0', '1280a5', '1795b8', '29a9cc', '35b6d6', '57bfd9', '8ccbe2', 'a9d6e8', 'c9e6f0',
    '0f4a33', '145c40', '0f5c4a', '1c6e4c', '2a8055', '168a5a', '2b9d6c', '2fae9c', '38bda9', '43c3a8', '22a35c', '7fb93a', '9fce4b', 'b8dc70', 'd6ecb0',
    'c8702a', 'd47d1f', 'e0892b', 'dd9a3c', 'e6a72c', 'e8b52f', 'e9bf3a', 'efcb3e', 'f4e03c', 'f7ea4a', 'f0dc62', 'e8cf86', 'ecd9a4', 'f1e2c2', 'f6eedd',
    '5b3a73', '67468a', '744f95', '7d5aa0', '8a66a8', '9a72b0', 'a785bb', 'b79ac8', 'c9b2d6', 'dccfe4',
    '4a2b20', '6b4026', '80502f', '96653a', 'a87a4a', 'bb946a', 'cfb08c', 'ddcdb4', 'e8e2d6',
    '111111', '2e2e2e', '4a4a4a', '666666', '7d7d7d', '949494', 'a9a9a9', 'bdbdbd', 'd2d2d2', 'e8e8e8'
];
document.getElementById('swatches').innerHTML = colors.map(c => `<i style="background:#${c}"></i>`).join('');
```
